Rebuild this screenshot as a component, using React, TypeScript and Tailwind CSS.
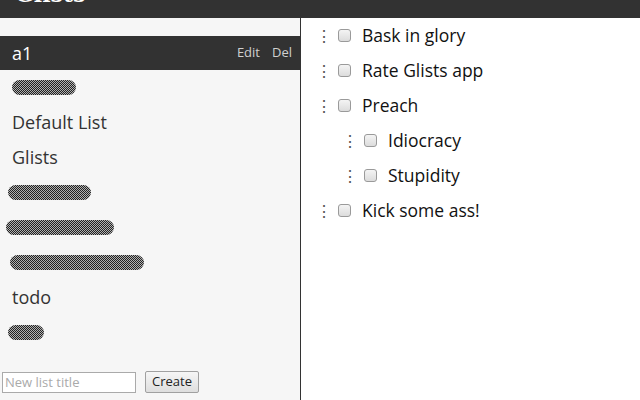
const lists = [
  { kind: "blob", w: 64, ml: 12 },
  { kind: "text", label: "Default List" },
  { kind: "text", label: "Glists" },
  { kind: "blob", w: 83, ml: 8 },
  { kind: "blob", w: 108, ml: 6 },
  { kind: "blob", w: 134, ml: 10 },
  { kind: "text", label: "todo" },
  { kind: "blob", w: 36, ml: 8 },
];

const items = [
  { label: "Bask in glory", indent: false },
  { label: "Rate Glists app", indent: false },
  { label: "Preach", indent: false },
  { label: "Idiocracy", indent: true },
  { label: "Stupidity", indent: true },
  { label: "Kick some ass!", indent: false },
];

function Blob({ w, ml }: { w: number; ml: number }) {
  return (
    <div
      className="h-[15px] rounded-full bg-[repeating-conic-gradient(#222_0%_25%,#b0b0b0_0%_50%)] bg-[length:2px_2px]"
      style={{ width: w, marginLeft: ml }}
    />
  );
}

function Checkbox() {
  return (
    <span className="block h-[13px] w-[13px] rounded-[3px] border border-[#9a9a9a] bg-gradient-to-b from-[#f4f4f4] to-[#dcdcdc]" />
  );
}

export default function App() {
  return (
    <div className="flex h-[400px] w-[640px] flex-col overflow-hidden bg-white font-['Open_Sans',sans-serif]">
      <div className="h-[18px] shrink-0 overflow-hidden bg-[#323232]">
        <div className="ml-[15px] mt-[-17px] font-['DejaVu_Serif',serif] text-[22px] font-bold leading-[22px] text-white">
          Glists
        </div>
      </div>

      <div className="flex min-h-0 flex-1">
        <div className="flex w-[301px] shrink-0 flex-col border-r border-[#333] bg-[#f6f6f6] pt-[18px]">
          <div className="flex h-[34px] items-center bg-[#323232] pl-3 pr-2 text-white">
            <span className="text-[18px]">a1</span>
            <span className="ml-auto text-[13px] text-[#d0d0d0]">Edit</span>
            <span className="ml-[12px] text-[13px] text-[#d0d0d0]">Del</span>
          </div>
          {lists.map((l, i) => (
            <div key={i} className="flex h-[35px] items-center">
              {l.kind === "blob" ? (
                <Blob w={l.w!} ml={l.ml!} />
              ) : (
                <span className="pl-3 text-[18px] text-[#333]">{l.label}</span>
              )}
            </div>
          ))}
          <div className="mt-[21px] flex items-center gap-[9px] pl-[2px]">
            <input
              placeholder="New list title"
              className="h-[21px] w-[134px] border border-[#aaa] bg-white px-[2px] text-[13px] text-[#333] placeholder:text-[#aaa] outline-none"
            />
            <button className="h-[22px] rounded-[2px] border border-[#a0a0a0] bg-gradient-to-b from-[#f6f6f6] to-[#dedede] px-[6px] text-[13px] text-[#222]">
              Create
            </button>
          </div>
        </div>

        <div className="flex-1">
          {items.map((it) => (
            <div
              key={it.label}
              className={`flex h-[35px] items-center ${it.indent ? "pl-[41px]" : "pl-[15px]"}`}
            >
              <span className="w-[8px] text-[16px] leading-none text-[#555]">⋮</span>
              <span className="ml-[14px]">
                <Checkbox />
              </span>
              <span className="ml-[11px] text-[17.5px] text-[#111]">{it.label}</span>
            </div>
          ))}
        </div>
      </div>
    </div>
  );
}
